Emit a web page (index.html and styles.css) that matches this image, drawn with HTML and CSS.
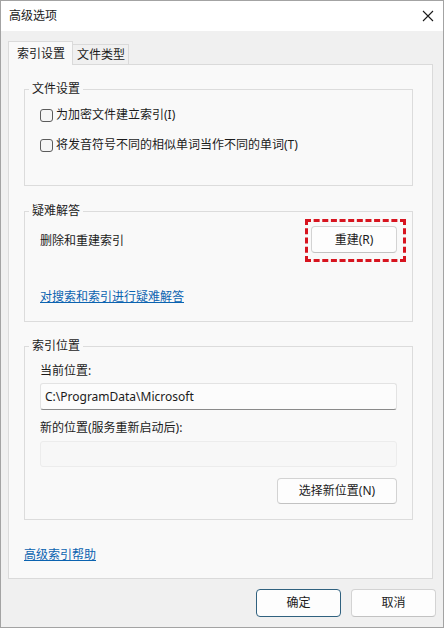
FILE: index.html
```html
<!DOCTYPE html>
<html lang="zh-CN">
<head>
<meta charset="utf-8">
<title>高级选项</title>
<link rel="stylesheet" href="styles.css">
</head>
<body>
<div class="window">
  <div class="titlebar">
    <span class="title">高级选项</span>
    <svg class="close" width="12" height="12" viewBox="0 0 12 12"><path d="M1 1 L11 11 M11 1 L1 11" stroke="#1a1a1a" stroke-width="1.1" fill="none"/></svg>
  </div>
  <div class="body">
    <div class="tabs">
      <div class="tab active">索引设置</div>
      <div class="tab">文件类型</div>
    </div>
    <div class="panel">
      <fieldset class="group g1">
        <legend>文件设置</legend>
        <div class="group-body">
          <label class="check"><span class="box"></span><span>为加密文件建立索引(I)</span></label>
          <label class="check second"><span class="box"></span><span>将发音符号不同的相似单词当作不同的单词(T)</span></label>
        </div>
      </fieldset>
      <fieldset class="group g2">
        <legend>疑难解答</legend>
        <div class="group-body g2-body">
          <div class="rebuild-row">
            <span>删除和重建索引</span>
            <div class="highlight"><button class="btn rebuild">重建(R)</button></div>
          </div>
          <a class="link trouble" href="#">对搜索和索引进行疑难解答</a>
        </div>
      </fieldset>
      <fieldset class="group g3">
        <legend>索引位置</legend>
        <div class="group-body g3-body">
          <div class="field-label">当前位置:</div>
          <div class="input current">C:\ProgramData\Microsoft</div>
          <div class="field-label second-label">新的位置(服务重新启动后):</div>
          <div class="input empty"></div>
          <div class="btn-row"><button class="btn choose">选择新位置(N)</button></div>
        </div>
      </fieldset>
      <a class="link help" href="#">高级索引帮助</a>
    </div>
    <div class="footer">
      <button class="btn dlg default">确定</button>
      <button class="btn dlg">取消</button>
    </div>
  </div>
</div>
</body>
</html>
```

FILE: styles.css
```css
* { box-sizing: border-box; }
html, body { margin: 0; padding: 0; }
body {
  width: 444px;
  height: 628px;
  font-family: "Noto Sans", "Noto Sans CJK SC", sans-serif;
  font-size: 12px;
  line-height: 16px;
  color: #1b1b1b;
  background: #f0f0f0;
}
.window {
  width: 444px;
  height: 628px;
  border: 1px solid #a3a3a3;
  display: flex;
  flex-direction: column;
  background: #f0f0f0;
}
.titlebar {
  height: 30px;
  background: #ffffff;
  display: flex;
  align-items: center;
  justify-content: space-between;
  padding: 0 9px 0 8px;
  flex: none;
}
.title { font-size: 12px; line-height: 16px; }
.close { display: block; }
.body {
  flex: 1;
  padding: 10px 7px 0 7px;
  display: flex;
  flex-direction: column;
}
.tabs {
  display: flex;
  align-items: flex-end;
  height: 23px;
}
.tab {
  height: 20px;
  padding: 2px 3px 0 4px;
  border: 1px solid #dadada;
  border-bottom: none;
  border-left: none;
  background: #f0f0f0;
}
.tab.active {
  height: 24px;
  margin-bottom: -1px;
  padding: 4px 7px 0 8px;
  background: #f9f9f9;
  border-left: 1px solid #dadada;
  position: relative;
  z-index: 1;
}
.panel {
  width: 425px;
  height: 515px;
  background: #f9f9f9;
  border: 1px solid #dadada;
  padding: 16px 19px 0 15px;
}
.group {
  margin: 0;
  padding: 0;
  border: 1px solid #dcdcdc;
  min-width: 0;
}
.group legend {
  margin-left: 4px;
  padding: 0 3px;
  line-height: 16px;
}
.group-body { padding: 8px 15px 30px 15px; }
.g2 { margin-top: 17px; }
.g3 { margin-top: 16px; }
.check {
  display: flex;
  align-items: center;
  height: 20px;
  gap: 3px;
}
.check.second { margin-top: 10px; }
.box {
  width: 13px;
  height: 13px;
  border: 1px solid #5c5c5c;
  border-radius: 3px;
  background: #f5f5f5;
  flex: none;
}
.g2-body { padding: 0 6px 16px 15px; }
.rebuild-row {
  display: flex;
  align-items: center;
  justify-content: space-between;
  height: 43px;
}
.highlight {
  border: 3px dashed #d7141f;
  padding: 4px 6px 6px 3px;
}
.btn {
  font: inherit;
  color: #1b1b1b;
  background: #fdfdfd;
  border: 1px solid #d3d3d3;
  border-bottom-color: #c2c2c2;
  border-radius: 4px;
  padding: 0;
  display: flex;
  align-items: center;
  justify-content: center;
}
.rebuild { width: 86px; height: 27px; }
.link {
  display: block;
  color: #0b63b0;
  text-decoration: underline;
  line-height: 16px;
}
.trouble { margin-top: 27px; width: max-content; }
.g3-body { padding: 9px 15px 15px 15px; }
.field-label { height: 16px; }
.second-label { margin-top: 10px; }
.input {
  margin-top: 4px;
  height: 27px;
  background: #fcfcfc;
  border: 1px solid #e3e3e3;
  border-bottom: 1px solid #8a8a8a;
  border-radius: 3px;
  padding: 0 4px;
  display: flex;
  align-items: center;
}
.input.empty {
  margin-top: 5px;
  height: 26px;
  background: #f7f7f7;
  border: 1px solid #ececec;
}
.btn-row {
  margin-top: 11px;
  display: flex;
  justify-content: flex-end;
}
.choose { width: 120px; height: 26px; }
.help { margin-top: 27px; width: max-content; }
.footer {
  display: flex;
  justify-content: flex-end;
  gap: 10px;
  padding-top: 10px;
}
.dlg { width: 85px; height: 28px; }
.dlg.default { border: 1px solid #30617f; }
```
